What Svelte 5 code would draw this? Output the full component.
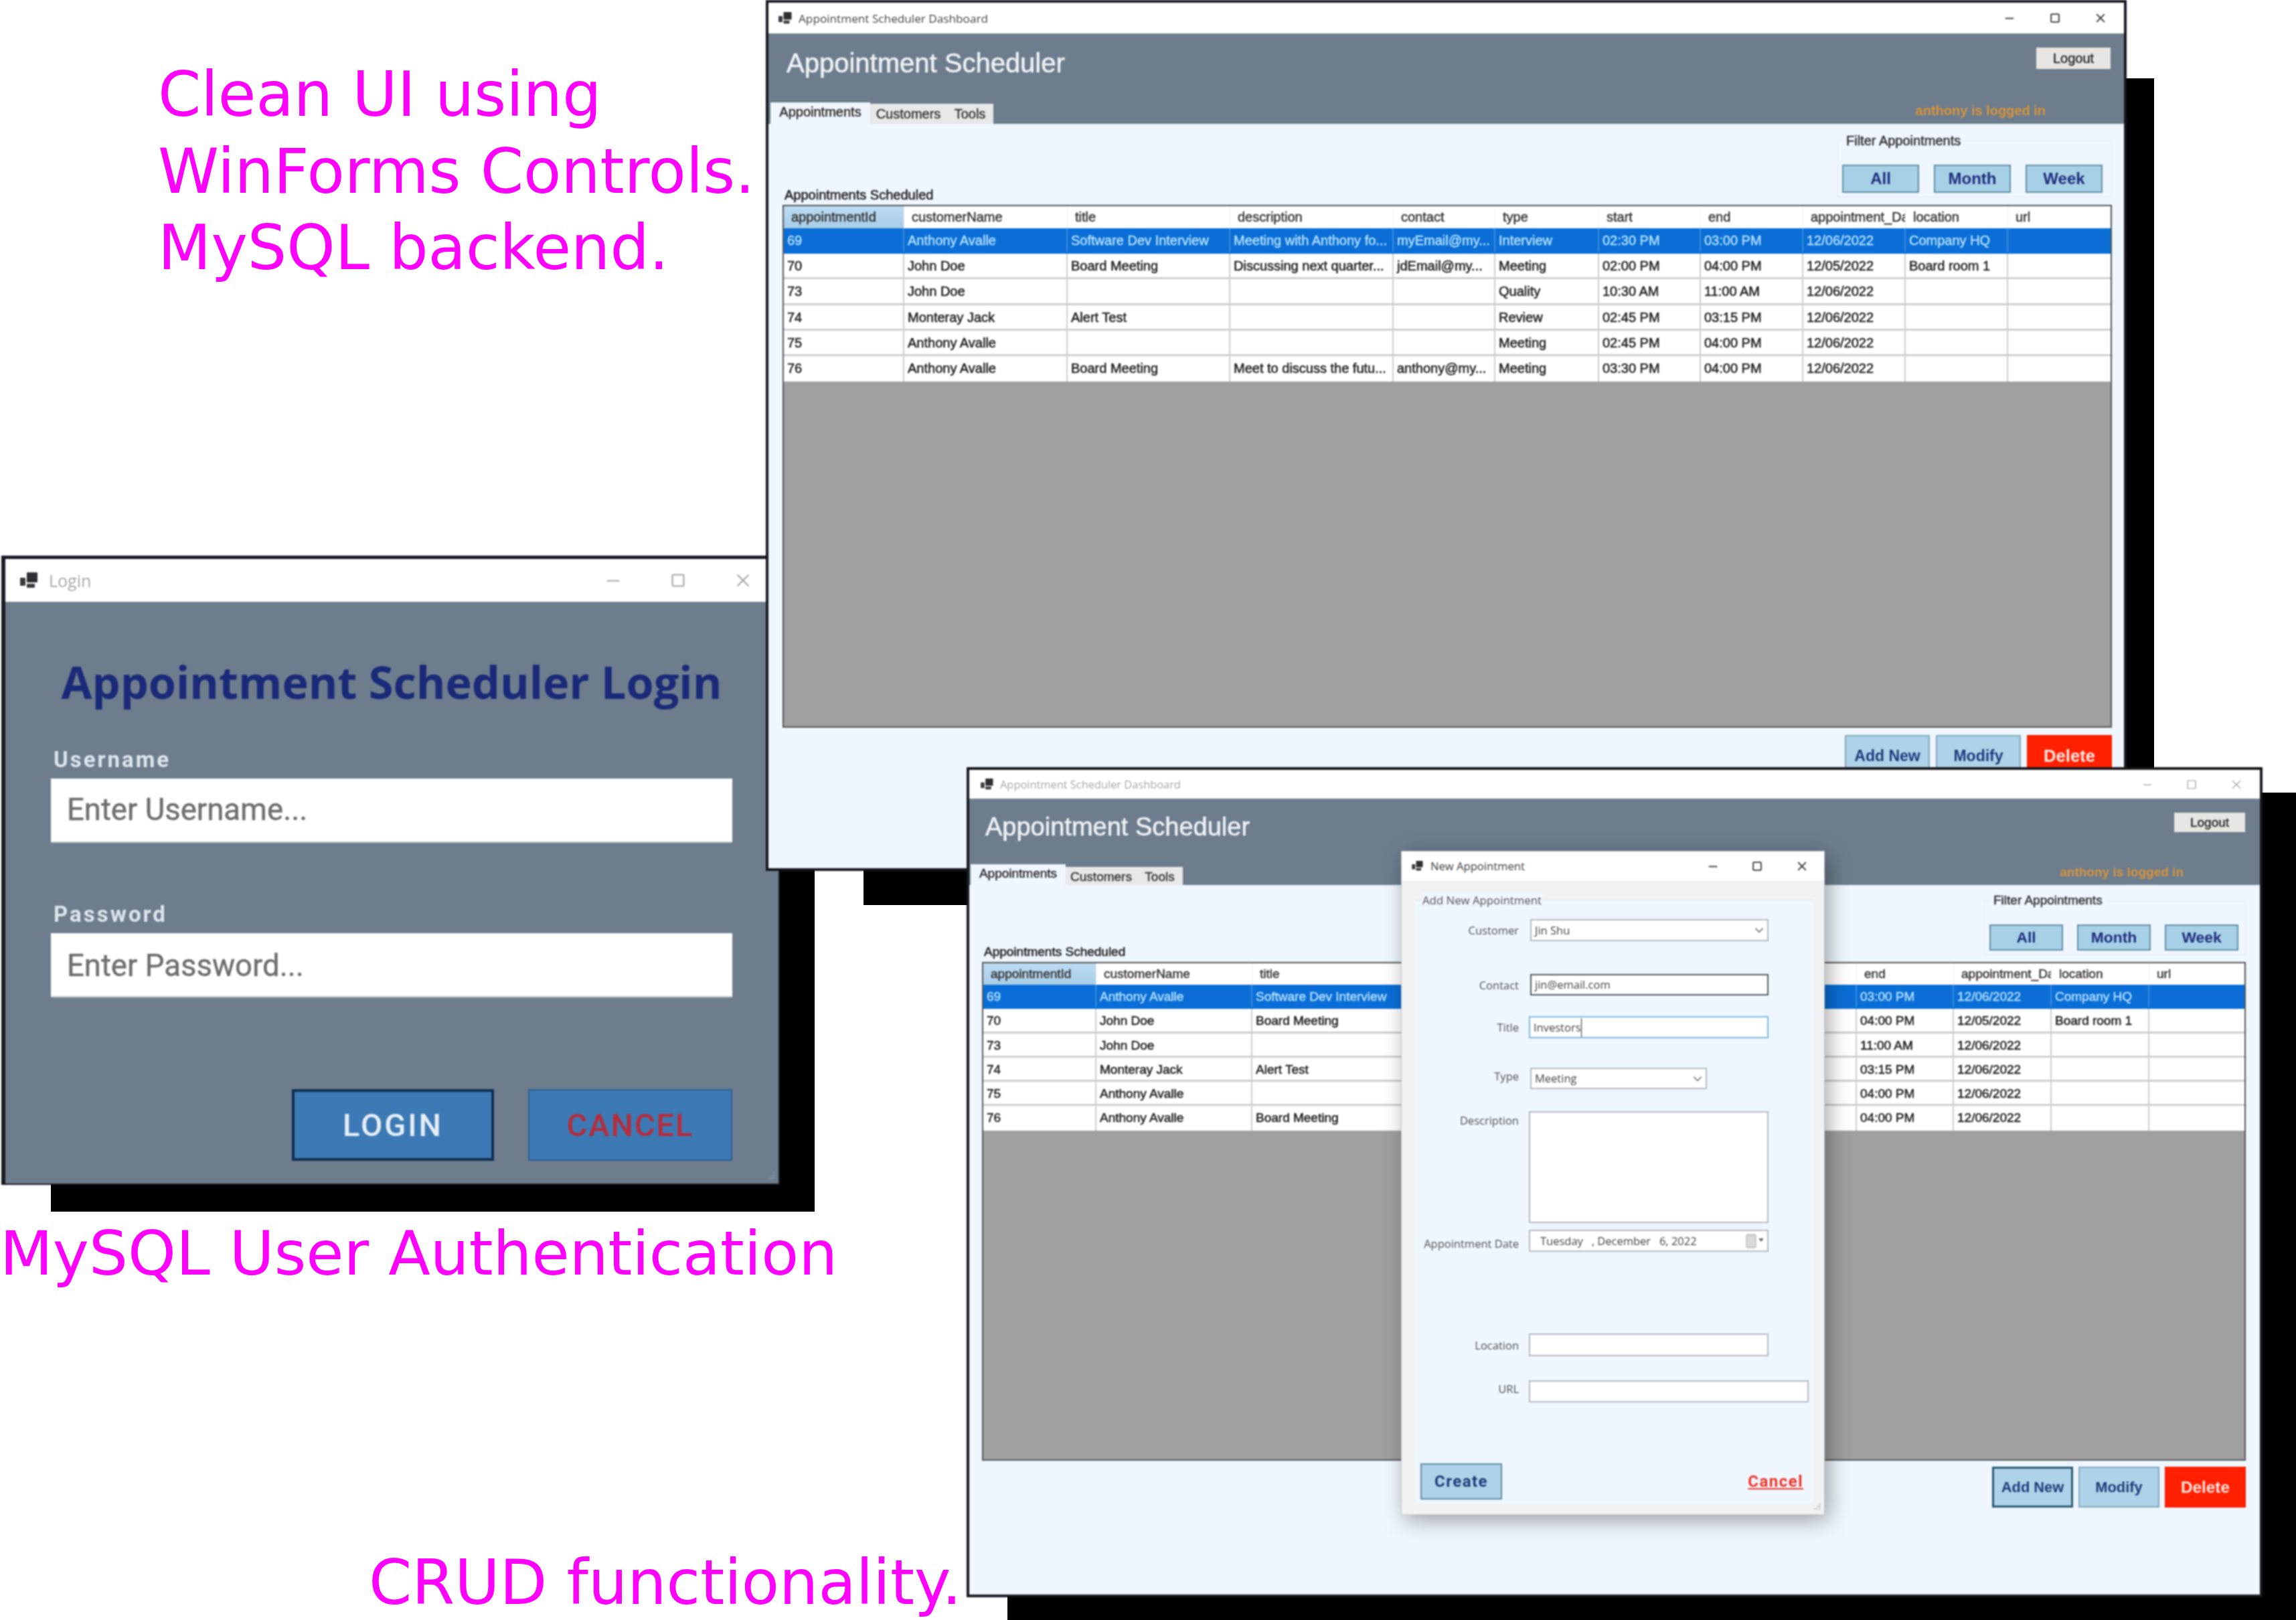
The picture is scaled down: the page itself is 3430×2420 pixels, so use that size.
<script>
  const columns = ['appointmentId', 'customerName', 'title', 'description', 'contact', 'type', 'start', 'end', 'appointment_Da', 'location', 'url'];
  const rows = [
    ['69', 'Anthony Avalle', 'Software Dev Interview', 'Meeting with Anthony fo...', 'myEmail@my...', 'Interview', '02:30 PM', '03:00 PM', '12/06/2022', 'Company HQ', ''],
    ['70', 'John Doe', 'Board Meeting', 'Discussing next quarter...', 'jdEmail@my...', 'Meeting', '02:00 PM', '04:00 PM', '12/05/2022', 'Board room 1', ''],
    ['73', 'John Doe', '', '', '', 'Quality', '10:30 AM', '11:00 AM', '12/06/2022', '', ''],
    ['74', 'Monteray Jack', 'Alert Test', '', '', 'Review', '02:45 PM', '03:15 PM', '12/06/2022', '', ''],
    ['75', 'Anthony Avalle', '', '', '', 'Meeting', '02:45 PM', '04:00 PM', '12/06/2022', '', ''],
    ['76', 'Anthony Avalle', 'Board Meeting', 'Meet to discuss the futu...', 'anthony@my...', 'Meeting', '03:30 PM', '04:00 PM', '12/06/2022', '', '']
  ];
</script>

{#snippet appIcon()}
  <svg class="app-icon" viewBox="0 0 28 24" aria-hidden="true">
    <rect x="0" y="8" width="8" height="12" rx="1" fill="#3a3a3f" />
    <rect x="10" y="0" width="16" height="15" rx="1" fill="#2e2e33" />
    <rect x="10" y="17" width="12" height="6" rx="1" fill="#3a3a3f" />
  </svg>
{/snippet}

{#snippet controls()}
  <div class="controls">
    <span class="ctl"><svg viewBox="0 0 20 20"><path d="M3 10.5h14" /></svg></span>
    <span class="ctl"><svg viewBox="0 0 20 20"><rect x="3.5" y="3.5" width="13" height="13" rx="1" /></svg></span>
    <span class="ctl"><svg viewBox="0 0 20 20"><path d="M3.5 3.5l13 13M16.5 3.5l-13 13" /></svg></span>
  </div>
{/snippet}

{#snippet grip()}
  <svg class="grip" viewBox="0 0 12 12" aria-hidden="true">
    <path d="M10 2v1M7 5v1M10 5v1M4 8v1M7 8v1M10 8v1" stroke="#9aa5b0" stroke-width="2" />
  </svg>
{/snippet}

{#snippet dashboard(cls)}
  <section class="win dash {cls}">
    <div class="titlebar">
      {@render appIcon()}
      <span class="win-title">Appointment Scheduler Dashboard</span>
      {@render controls()}
    </div>
    <header class="head">
      <h1>Appointment Scheduler</h1>
      <button class="logout">Logout</button>
      <div class="tabs">
        <span class="tab active">Appointments</span>
        <span class="tab">Customers</span>
        <span class="tab">Tools</span>
      </div>
      <span class="logged">anthony is logged in</span>
    </header>
    <div class="body">
      <div class="toolbar">
        <span class="caption">Appointments Scheduled</span>
        <fieldset class="filter">
          <legend>Filter Appointments</legend>
          <button>All</button>
          <button>Month</button>
          <button>Week</button>
        </fieldset>
      </div>
      <div class="grid">
        <div class="row hdr">
          {#each columns as col, i}
            <span class="cell" class:sorted={i === 0}>{col}</span>
          {/each}
        </div>
        {#each rows as row, r}
          <div class="row" class:selected={r === 0}>
            {#each row as value}
              <span class="cell">{value}</span>
            {/each}
          </div>
        {/each}
      </div>
      <div class="actions">
        <button class="act add">Add New</button>
        <button class="act">Modify</button>
        <button class="act del">Delete</button>
      </div>
    </div>
  </section>
{/snippet}

<main class="canvas">
  <div class="drop drop-login"></div>
  <section class="win login">
    <div class="titlebar">
      {@render appIcon()}
      <span class="win-title">Login</span>
      {@render controls()}
    </div>
    <div class="login-body">
      <h2>Appointment Scheduler Login</h2>
      <label class="l-user">Username</label>
      <div class="l-input">Enter Username...</div>
      <label class="l-pass">Password</label>
      <div class="l-input">Enter Password...</div>
      <div class="l-actions">
        <button class="l-login">LOGIN</button>
        <button class="l-cancel">CANCEL</button>
      </div>
    </div>
    {@render grip()}
  </section>

  <div class="drop drop-a"></div>
  {@render dashboard('dash-a')}

  <div class="drop drop-b"></div>
  {@render dashboard('dash-b')}

  <section class="win dialog">
    <div class="titlebar">
      {@render appIcon()}
      <span class="win-title">New Appointment</span>
      {@render controls()}
    </div>
    <div class="d-body">
      <div class="group">
        <span class="g-legend">Add New Appointment</span>
        <div class="f-row r-customer">
          <label>Customer</label>
          <div class="input combo">Jin Shu
            <svg viewBox="0 0 12 8"><path d="M1 1.5l5 5 5-5" /></svg>
          </div>
        </div>
        <div class="f-row r-contact">
          <label>Contact</label>
          <div class="input dark">jin@email.com</div>
        </div>
        <div class="f-row r-title">
          <label>Title</label>
          <div class="input focus"><span class="caret">Investors</span></div>
        </div>
        <div class="f-row r-type">
          <label>Type</label>
          <div class="input combo">Meeting
            <svg viewBox="0 0 12 8"><path d="M1 1.5l5 5 5-5" /></svg>
          </div>
        </div>
        <div class="f-row r-desc">
          <label>Description</label>
          <div class="input"></div>
        </div>
        <div class="f-row r-date">
          <label>Appointment Date</label>
          <div class="input date">
            <span class="date-text">Tuesday   , December   6, 2022</span>
            <svg viewBox="0 0 28 22">
              <rect x="1" y="1" width="14" height="20" rx="2" fill="#d9d9d9" stroke="#a9a9a9" />
              <path d="M19 7h8l-4 5z" fill="#666" />
            </svg>
          </div>
        </div>
        <div class="f-row r-location">
          <label>Location</label>
          <div class="input"></div>
        </div>
        <div class="f-row r-url">
          <label>URL</label>
          <div class="input"></div>
        </div>
        <div class="d-actions">
          <button class="create">Create</button>
          <span class="d-cancel">Cancel</span>
        </div>
      </div>
    </div>
    {@render grip()}
  </section>

  <p class="note note-clean">Clean UI using
WinForms Controls.
MySQL backend.</p>
  <p class="note note-auth">MySQL User Authentication</p>
  <p class="note note-crud">CRUD functionality.</p>
</main>

<style>
  :global(body) { margin: 0; background: #fff; }
  .canvas {
    position: relative; width: 3430px; height: 2420px; overflow: hidden;
    background: #fff; font-family: "Liberation Sans", Arial, sans-serif;
  }
  h1, h2, p { margin: 0; font-weight: 400; }
  button { font-family: inherit; padding: 0; cursor: default; }

  /* pasted drop shadows behind each screenshot */
  .drop { position: absolute; background: #000; }
  .drop-login { left: 76px; top: 900px; width: 1141px; height: 910px; }
  .drop-a { left: 1290px; top: 117px; width: 1928px; height: 1235px; }
  .drop-b { left: 1505px; top: 1184px; width: 1925px; height: 1236px; }

  .note {
    position: absolute; color: #f0f; white-space: pre;
    font-family: "DejaVu Sans", sans-serif; font-size: 92px; line-height: 114.5px;
  }
  .note-clean { left: 236px; top: 85px; }
  .note-auth { left: 0; top: 1816px; font-size: 91.4px; }
  .note-crud { left: 551px; top: 2308px; }

  .win { position: absolute; box-sizing: border-box; display: flex; flex-direction: column; filter: blur(.8px); }

  .titlebar { display: flex; align-items: center; background: #fff; flex: none; }
  .app-icon { flex: none; display: block; }
  .win-title { font-family: "Open Sans", sans-serif; white-space: nowrap; }
  .controls { margin-left: auto; display: flex; }
  .ctl { display: flex; align-items: center; justify-content: center; }
  .ctl svg { fill: none; stroke: currentColor; stroke-width: 1.6; display: block; }
  .grip { position: absolute; right: 4px; bottom: 4px; width: 14px; height: 14px; }

  /* dashboards */
  .dash { border: 4px solid #17171d; background: #eff6fd; }
  .dash-a {
    left: 1144px; top: 0; width: 2033px; height: 1301px;
    --fs: 20px; --title-h: 46px; --head-h: 135px; --tool-h: 121px; --grid-h: 781px; --row: 38.2px; --hdr: 33px;
    --cols: 180px 244px 243px 244px 152px 155px 152px 153px 153px 153px 1fr;
    --pad-l: 21px; --pad-r: 18px;
  }
  .dash-b {
    left: 1444px; top: 1146px; width: 1936px; height: 1240px;
    --fs: 19px; --title-h: 43px; --head-h: 129px; --tool-h: 115px; --grid-h: 745px; --row: 36.3px; --hdr: 32px;
    --cols: 169px 233px 233px 233px 145px 146px 146px 145px 146px 146px 1fr;
    --pad-l: 19px; --pad-r: 21px;
  }
  .dash .titlebar { height: var(--title-h); }
  .dash-a .app-icon { width: 21px; height: 18px; margin: 0 9px 0 15px; }
  .dash-a .win-title { font-size: 17.2px; color: #444; }
  .dash-a .controls { color: #333; padding-right: 1px; }
  .dash-a .ctl { width: 68px; }
  .dash-a .ctl svg { width: 18px; height: 18px; stroke-width: 2; }
  .dash-b .app-icon { width: 20px; height: 17px; margin: 0 9px 0 17px; }
  .dash-b .win-title { font-size: 16.4px; color: #a8a8a8; }
  .dash-b .controls { color: #aaa; padding-right: 2px; }
  .dash-b .ctl { width: 66.5px; }
  .dash-b .ctl svg { width: 18px; height: 18px; }

  .head {
    height: var(--head-h); flex: none; background: #6d7d8d;
    display: grid; grid-template-columns: 1fr auto; grid-template-rows: 1fr auto;
  }
  .head h1 { font-size: 2em; color: #eef2f5; align-self: start; margin-top: 21px; white-space: nowrap; -webkit-text-stroke: .6px #eef2f5; }
  .dash { font-size: var(--fs); }
  .dash-a h1 { line-height: 46px; margin-left: 27px; }
  .dash-b h1 { line-height: 42px; margin-left: 24px; }
  .logout {
    align-self: start; justify-self: end; margin-top: 21px; background: #e8e6e3; border: 0; color: #222;
    font-size: var(--fs); -webkit-text-stroke: .35px #222;
  }
  .dash-a .logout { width: 111px; height: 32px; margin-right: 20px; }
  .dash-b .logout { width: 106px; height: 29px; margin-right: 22px; }
  .tabs { display: flex; align-items: flex-end; -webkit-text-stroke: .4px #333; }
  .dash-a .tabs { margin-left: 3px; }
  .dash-b .tabs { margin-left: 2px; }
  .tab { background: #e8e8e8; color: #333; text-align: center; box-sizing: border-box; }
  .tab.active { background: #eff6fd; color: #222; }
  .dash-a .tab { height: 30px; line-height: 31px; width: 114px; }
  .dash-a .tab.active { height: 32px; width: 149px; line-height: 29px; }
  .dash-a .tab:last-child { width: 70px; }
  .dash-b .tab { height: 27px; line-height: 29px; width: 106px; }
  .dash-b .tab.active { height: 31px; width: 142px; line-height: 28px; }
  .dash-b .tab:last-child { width: 69px; }
  .logged { color: #d9933a; font-weight: 700; align-self: end; margin-bottom: 8px; text-align: right; white-space: nowrap; }
  .dash-a .logged { line-height: 24px; margin-right: 117px; }
  .dash-b .logged { line-height: 22px; margin-right: 114px; }

  .body { flex: 1; padding: 0 var(--pad-r) 0 var(--pad-l); min-height: 0; display: flex; flex-direction: column; }
  .toolbar { height: var(--tool-h); flex: none; display: flex; justify-content: space-between; align-items: flex-end; }
  .caption { color: #222; line-height: 20px; margin: 0 0 5px 3px; -webkit-text-stroke: .55px #222; }
  .filter {
    margin: 0; box-sizing: border-box; border: 1px solid #e3ebf3; display: flex; min-inline-size: 0;
  }
  .filter legend { padding: 0 6px; line-height: 20px; color: #333; -webkit-text-stroke: .5px #333; margin-left: 0; }
  .filter button {
    background: #a6d0e6; border: 2px solid #5f8fa3; color: #1e2d7d; font-weight: 700;
    font-size: 1.2em;
  }
  .dash-a .filter { width: 410px; padding: 26px 11px 6px 6px; margin-bottom: 11px; gap: 22px; }
  .dash-a .filter button { width: 115px; height: 42px; }
  .dash-b .filter { width: 391px; padding: 26px 9px 6px 7px; margin-bottom: 10px; gap: 21px; }
  .dash-b .filter button { width: 110px; height: 39px; }

  .grid {
    height: var(--grid-h); flex: none; box-sizing: border-box; overflow: hidden;
    background: #9f9f9f; border: 2px solid #555;
  }
  .row { display: grid; grid-template-columns: var(--cols); height: var(--row); box-sizing: border-box; background: #fff; border-bottom: 3px solid #cfcfcf; }
  .row:last-child { border-bottom: 0; }
  .row.hdr { height: var(--hdr); border-bottom: 0; }
  .cell {
    box-sizing: border-box; padding-left: 5px; line-height: calc(var(--row) - 1px); white-space: nowrap; overflow: hidden;
    color: #222; border-right: 2px solid #cdcdcd; -webkit-text-stroke: .55px #222;
  }
  .cell:last-child { border-right: 0; }
  .hdr .cell { padding-left: 11px; line-height: var(--hdr); border-right: 1px solid #eee; color: #333; -webkit-text-stroke: .45px #333; }
  .hdr .cell.sorted { background: linear-gradient(#bcdcf2, #a8cde8); }
  .row.selected { background: #0a6ed6; border-bottom-color: #0a6ed6; }
  .selected .cell { color: #b5e2fb; -webkit-text-stroke: .4px #b5e2fb; border-right-color: #3c8ddf; }

  .actions { display: flex; justify-content: flex-end; }
  .act { background: #aed3e8; border: 2px solid #7fa7bc; color: #1f3a7c; font-weight: 700; font-size: 1.15em; }
  .dash-a .actions { gap: 9px; margin-top: 11px; }
  .dash-a .act { width: 127px; height: 62px; }
  .dash-b .actions { gap: 8px; margin-top: 9px; }
  .dash-b .act { width: 121px; height: 61px; }
  .dash-b .add { border: 3px solid #2a5a70; }
  .act.del { background: #ff2000; border-color: #f31d00; color: #fbe7e4; font-size: 1.28em; }

  /* login */
  .login {
    left: 2px; top: 830px; width: 1163px; height: 940px;
    border: solid #1a1a22; border-width: 5px 2px 2px 6px; background: #6d7d8d;
  }
  .login .titlebar { height: 64px; }
  .login .app-icon { width: 28px; height: 24px; margin: 0 15px 0 22px; }
  .login .win-title { font-size: 25px; color: #a8a8a8; }
  .login .controls { color: #a5a5a5; padding-right: 5px; }
  .login .ctl { width: 97px; }
  .login .ctl svg { width: 26px; height: 26px; }
  .login-body { padding: 0 69px 0 68px; display: flex; flex-direction: column; }
  .login-body h2 {
    margin-top: 75px; font-family: "Open Sans", sans-serif; font-weight: 700; font-size: 66.6px; line-height: 90px;
    color: #1a2a78; text-align: center; white-space: nowrap;
  }
  .login-body label {
    font-family: Roboto, sans-serif; font-weight: 700; font-size: 33px; line-height: 40px; color: #dde6ee; margin-left: 4px;
    letter-spacing: 3px;
  }
  .l-user { margin-top: 51px; }
  .l-pass { margin-top: 87px; }
  .l-input {
    margin-top: 8px; height: 96px; box-sizing: border-box; background: #fff; padding-left: 24px;
    font-family: Roboto, sans-serif; font-size: 45.5px; line-height: 94px; color: #6e6e6e;
    border-bottom: 2px solid #c8ced4; -webkit-text-stroke: .4px #6e6e6e;
  }
  .l-input + label + .l-input { line-height: 97px; }
  .l-actions { margin-top: 137px; display: flex; justify-content: flex-end; gap: 51px; }
  .l-actions button {
    height: 107px; background: #3d7ab5; font-family: Roboto, sans-serif; font-size: 47px; font-weight: 500; letter-spacing: 3px;
  }
  .l-login { width: 302px; border: 4px solid #0f2e52; color: #e6eff8; }
  .l-actions .l-cancel { width: 305px; border: 2px solid #2c5f90; color: #b52d3c; letter-spacing: 2px; }

  /* new appointment dialog */
  .dialog {
    left: 2093px; top: 1271px; width: 633px; height: 992px;
    background: #f1f2f3; border: 1px solid #c4c6c8;
    box-shadow: 6px 8px 30px rgba(0, 0, 0, .35);
  }
  .dialog .titlebar { height: 43px; flex: none; }
  .dialog .app-icon { width: 18px; height: 15px; margin: 0 10px 0 15px; }
  .dialog .win-title { font-size: 16.6px; color: #444; }
  .dialog .controls { color: #333; }
  .dialog .ctl { width: 66.5px; }
  .dialog .ctl svg { width: 18px; height: 18px; stroke-width: 2; }
  .d-body { flex: 1; padding: 18px 16px 15px 20px; display: flex; min-height: 0; }
  .group {
    flex: 1; background: #eff6fd; padding-top: 0; position: relative;
    border-top: 1px solid #e2e9f1; margin-top: 11px;
  }
  .g-legend {
    display: block; width: fit-content; margin: -11px 0 0 11px; background: #eff6fd; padding-right: 2px;
    font-family: "Open Sans", sans-serif; font-size: 16.8px; line-height: 22px; color: #555;
  }
  .f-row {
    display: grid; grid-template-columns: 155px 358px; column-gap: 15px; align-items: center;
    font-family: "Open Sans", sans-serif; font-size: 16.5px; color: #555;
  }
  .f-row label { text-align: right; white-space: nowrap; }
  .input {
    box-sizing: border-box; height: 33px; background: #fff; border: 2px solid #b4b9bf; padding-left: 5px;
    line-height: 28px; color: #444; display: flex; align-items: center; justify-content: space-between;
  }
  .input.dark { border-color: #55585c; height: 32px; margin-left: 2px; }
  .input.focus { border-color: #7db8e0; justify-content: flex-start; }
  .caret { border-right: 1px solid #222; }
  .combo { margin-left: 2px; padding-right: 5px; }
  .combo svg { width: 14px; height: 9px; fill: none; stroke: #777; stroke-width: 1.5; }
  .date { padding: 0 4px 0 15px; }
  .date-text { white-space: pre; }
  .date svg { width: 28px; height: 22px; }
  .r-customer { margin-top: 17px; }
  .r-contact { margin-top: 49px; }
  .r-title { margin-top: 31px; }
  .r-type { margin-top: 44px; }
  .r-type .input { width: 264px; height: 32px; }
  .r-type label, .r-url label { margin-bottom: 8px; }
  .r-desc { margin-top: 33px; align-items: start; }
  .r-desc .input { height: 167px; }
  .r-desc label { margin-top: 2px; }
  .r-date { margin-top: 10px; }
  .r-date label { margin-top: 8px; }
  .r-location { margin-top: 122px; }
  .r-location .input { height: 34px; }
  .r-url { margin-top: 36px; grid-template-columns: 155px 418px; }
  .d-actions { margin: 91px 15px 0 8px; display: flex; justify-content: space-between; align-items: center; }
  .create {
    width: 122px; height: 54px; background: #aed3e8; border: 2px solid #5f8aa0; color: #1f3a7c;
    font-family: Roboto, sans-serif; font-weight: 700; font-size: 24px; letter-spacing: 1.5px;
  }
  .d-cancel { font-family: Roboto, sans-serif; font-weight: 700; font-size: 24px; letter-spacing: 1.5px; color: #ea3428; text-decoration: underline; }
</style>
